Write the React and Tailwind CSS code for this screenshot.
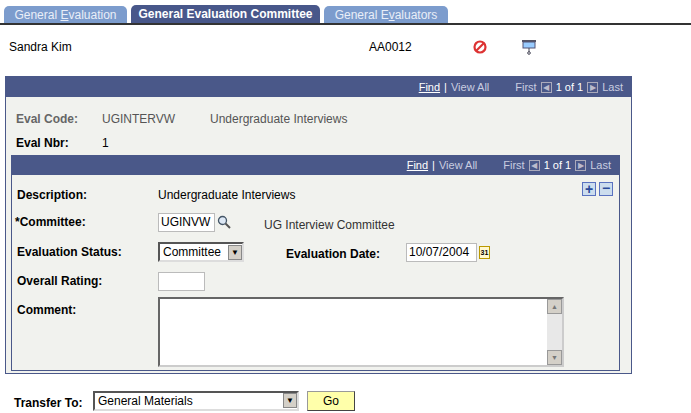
const F = { fontFamily: '"Liberation Sans", Arial, sans-serif' };

function NavBar() {
  return (
    <div className="h-[20px] bg-[#4a5889] flex items-center justify-end pr-[8px] text-[11px] text-[#c9cde0] gap-[4px]">
      <span className="underline text-white">Find</span><span className="text-white">|</span><span>View All</span>
      <span className="ml-[22px]">First</span>
      <span className="w-[11px] h-[11px] border border-[#aab] text-[8px] leading-[9px] text-center text-[#bbc]">◀</span>
      <span className="text-white">1 of 1</span>
      <span className="w-[11px] h-[11px] border border-[#aab] text-[8px] leading-[9px] text-center text-[#bbc]">▶</span>
      <span>Last</span>
    </div>
  );
}

function Label({ children, w = "w-[141px]" }) {
  return <div className={`${w} font-bold text-[12px] text-black shrink-0`}>{children}</div>;
}

export default function App() {
  return (
    <div style={F} className="w-[691px] h-[413px] bg-white text-[12px] text-black relative overflow-hidden">
      <div className="flex items-end h-[25px] border-b-2 border-[#333] pl-[4px] gap-[4px]">
        <div className="w-[123px] h-[17px] bg-[#7c9ccd] text-[#e9eef8] rounded-t-[5px] text-[12px] flex items-center justify-center"><span>General{" "}<u>E</u>valuation</span></div>
        <div className="w-[189px] h-[18px] bg-[#48578a] text-white font-bold rounded-t-[5px] text-[12px] flex items-center justify-center">General Evaluation Committee</div>
        <div className="w-[124px] h-[17px] bg-[#7c9ccd] text-[#e9eef8] rounded-t-[5px] text-[12px] flex items-center justify-center"><span>General E<u>v</u>aluators</span></div>
      </div>
      <div className="flex items-center h-[44px] pl-[9px]">
        <div className="w-[360px]">Sandra Kim</div>
        <div className="w-[103px]">AA0012</div>
        <svg width="16" height="16" viewBox="0 0 16 16"><circle cx="8" cy="8" r="5.5" fill="none" stroke="#d33" strokeWidth="2.2"/><line x1="4.5" y1="11.5" x2="11.5" y2="4.5" stroke="#d33" strokeWidth="2.2"/></svg>
        <svg className="ml-[33px]" width="16" height="16" viewBox="0 0 16 16"><rect x="1" y="1" width="14" height="2" fill="#556"/><rect x="2" y="3" width="12" height="6" fill="#9cf" stroke="#557"/><line x1="8" y1="9" x2="8" y2="13" stroke="#445"/><circle cx="8" cy="14" r="1.3" fill="none" stroke="#445"/></svg>
      </div>
      <div className="ml-[5px] mt-[7px] w-[627px] border border-[#4a5889] bg-[#f1f2ee] pb-[2px]">
        <NavBar />
        <div className="flex items-center h-[24px] mt-[10px] pl-[10px] text-[#555]">
          <div className="w-[86px] font-bold text-[#666]">Eval Code:</div>
          <div className="w-[108px]">UGINTERVW</div>
          <div>Undergraduate Interviews</div>
        </div>
        <div className="flex items-center h-[24px] pl-[10px]">
          <div className="w-[86px] font-bold">Eval Nbr:</div><div>1</div>
        </div>
        <div className="ml-[5px] w-[609px] border border-[#4a5889] border-t-0 pl-[5px] pb-[3px]">
          <div className="-ml-[5px]"><NavBar /></div>
          <div className="flex justify-end gap-[3px] pr-[6px] pt-[7px] h-[22px]">
            <span className="w-[14px] h-[14px] bg-[#cde] border border-[#5a72c0] text-[#2a4a9a] font-bold text-[14px] leading-[12px] text-center">+</span>
            <span className="w-[14px] h-[14px] bg-[#cde] border border-[#5a72c0] text-[#2a4a9a] font-bold text-[14px] leading-[11px] text-center">−</span>
          </div>
          <div className="flex items-center h-[8px] -mt-[6px]"><Label>Description:</Label><span>Undergraduate Interviews</span></div>
          <div className="flex items-center h-[38px] pt-[8px]">
            <Label><span className="-ml-[2px]">*Committee:</span></Label>
            <div className="w-[57px] h-[19px] bg-white border border-[#bbb] px-[2px] text-[12px] leading-[17px]">UGINVW</div>
            <svg className="ml-[2px]" width="14" height="14" viewBox="0 0 14 14"><circle cx="5.5" cy="5.5" r="4" fill="#dde8f5" stroke="#456" strokeWidth="1.3"/><line x1="8.5" y1="8.5" x2="13" y2="13" stroke="#555" strokeWidth="2"/></svg>
            <span className="ml-[33px] mt-[5px] text-[#333]">UG Interview Committee</span>
          </div>
          <div className="flex items-center h-[30px]">
            <Label>Evaluation Status:</Label>
            <div className="w-[86px] h-[20px] bg-white border-2 border-[#555] border-r-[#ddd] border-b-[#ddd] flex items-center justify-between pl-[3px]">
              <span>Committee</span>
              <span className="w-[14px] h-[15px] bg-[#d4d0c8] border border-[#888] text-[8px] leading-[13px] text-center">▼</span>
            </div>
            <div className="ml-[42px] w-[120px] font-bold mt-[4px]">Evaluation Date:</div>
            <div className="w-[71px] h-[19px] bg-white border border-[#bbb] px-[2px] leading-[17px]">10/07/2004</div>
            <span className="ml-[2px] w-[11px] h-[13px] border border-[#b90] bg-[#fff8d0] text-[7px] font-bold leading-[11px] text-center">31</span>
          </div>
          <div className="flex items-center h-[28px]">
            <Label>Overall Rating:</Label>
            <div className="w-[47px] h-[19px] bg-white border border-[#bbb]" />
          </div>
          <div className="flex items-start h-[72px] pt-[2px]">
            <Label><span className="block pt-[4px]">Comment:</span></Label>
            <div className="w-[406px] h-[70px] bg-white border-2 border-[#666] border-r-[#ccc] border-b-[#ccc] flex justify-end">
              <div className="w-[15px] h-full bg-[#e8e8e8] flex flex-col justify-between">
                <span className="h-[15px] bg-[#d4d0c8] border border-[#999] text-[7px] leading-[13px] text-center text-[#777]">▲</span>
                <span className="h-[15px] bg-[#d4d0c8] border border-[#999] text-[7px] leading-[13px] text-center text-[#777]">▼</span>
              </div>
            </div>
          </div>
        </div>
      </div>
      <div className="flex items-center mt-[15px] pl-[14px]">
        <div className="w-[79px] font-bold mt-[5px]">Transfer To:</div>
        <div className="w-[206px] h-[20px] bg-white border-2 border-[#555] border-r-[#ddd] border-b-[#ddd] flex items-center justify-between pl-[3px]">
          <span>General Materials</span>
          <span className="w-[14px] h-[15px] bg-[#d4d0c8] border border-[#888] text-[8px] leading-[13px] text-center">▼</span>
        </div>
        <div className="ml-[8px] w-[48px] h-[20px] bg-[#ffffaa] border border-[#999] border-r-[#444] border-b-[#444] text-center leading-[18px]">Go</div>
      </div>
    </div>
  );
}
